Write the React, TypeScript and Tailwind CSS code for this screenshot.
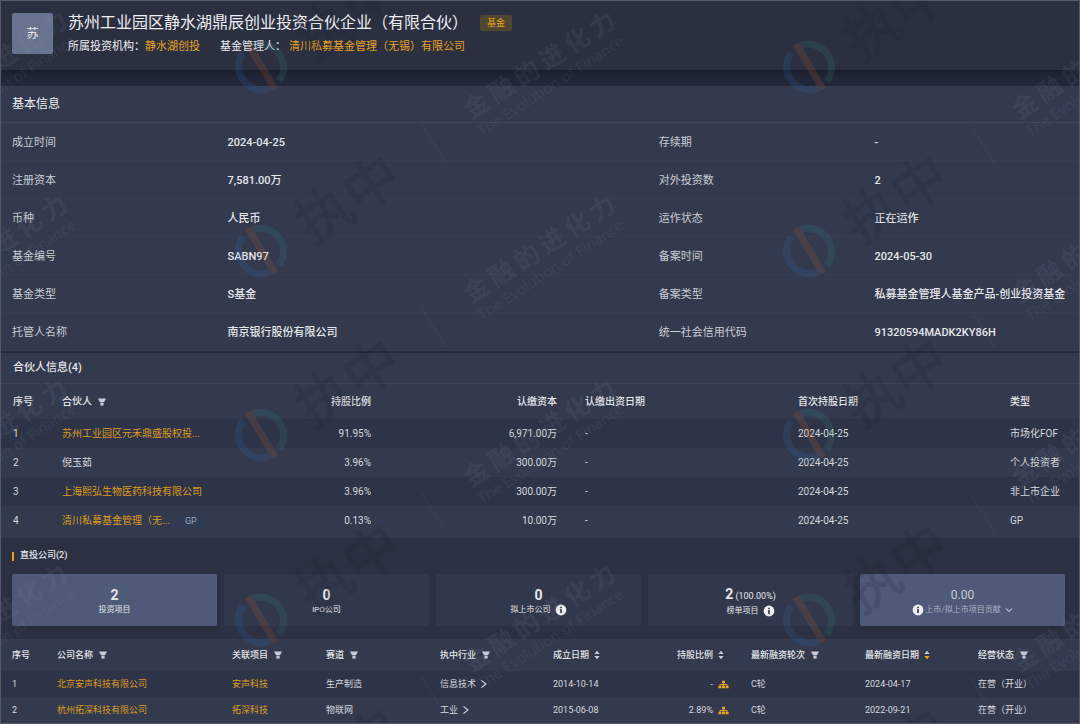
import type { ReactNode } from "react";

const basicInfo = [
  ["成立时间", "2024-04-25", "存续期", "-"],
  ["注册资本", "7,581.00万", "对外投资数", "2"],
  ["币种", "人民币", "运作状态", "正在运作"],
  ["基金编号", "SABN97", "备案时间", "2024-05-30"],
  ["基金类型", "S基金", "备案类型", "私募基金管理人基金产品-创业投资基金"],
  ["托管人名称", "南京银行股份有限公司", "统一社会信用代码", "91320594MADK2KY86H"],
];

const partners = [
  { name: "苏州工业园区元禾鼎盛股权投...", link: true, ratio: "91.95%", capital: "6,971.00万", type: "市场化FOF" },
  { name: "倪玉茹", link: false, ratio: "3.96%", capital: "300.00万", type: "个人投资者" },
  { name: "上海熙弘生物医药科技有限公司", link: true, ratio: "3.96%", capital: "300.00万", type: "非上市企业" },
  { name: "清川私募基金管理（无...", link: true, tag: "GP", ratio: "0.13%", capital: "10.00万", type: "GP" },
];

const companies = [
  {
    name: "北京安声科技有限公司",
    project: "安声科技",
    track: "生产制造",
    industry: "信息技术",
    founded: "2014-10-14",
    ratio: "-",
    round: "C轮",
    financed: "2024-04-17",
    status: "在营（开业）",
  },
  {
    name: "杭州拓深科技有限公司",
    project: "拓深科技",
    track: "物联网",
    industry: "工业",
    founded: "2015-06-08",
    ratio: "2.89%",
    round: "C轮",
    financed: "2022-09-21",
    status: "在营（开业）",
  },
];

function FilterButton({ label }: { label: string }) {
  return (
    <button type="button" aria-label={`筛选${label}`} className="ml-1.5 inline-flex shrink-0">
      <svg viewBox="0 0 8 8" className="h-2 w-2" fill="#c9ccd3">
        <path d="M0 .6h8L6.2 4H1.8z" />
        <path d="M2.4 4.5h3.2v3.1H2.4z" />
      </svg>
    </button>
  );
}

function SortButton({ label, desc = false }: { label: string; desc?: boolean }) {
  return (
    <button type="button" aria-label={`排序${label}`} className="inline-flex w-4 shrink-0 justify-center">
      <svg viewBox="0 0 6 10" className="h-2.5 w-1.5">
        <path d="M3 .8 5.6 4H.4z" fill="#c9ccd3" />
        <path d="M3 9.2 5.6 6H.4z" fill={desc ? "#f0a51c" : "#c9ccd3"} />
      </svg>
    </button>
  );
}

function InfoIcon() {
  return (
    <svg viewBox="0 0 12 12" className="h-3 w-3 shrink-0">
      <circle cx="6" cy="6" r="5.4" fill="#eceef1" />
      <path d="M5.2 5h1.6v4H5.2z" fill="#2b3142" />
      <path d="M5.2 2.8h1.6v1.4H5.2z" fill="#2b3142" />
    </svg>
  );
}

function StructureIcon() {
  return (
    <svg viewBox="0 0 11 9" className="h-[9px] w-[11px]" fill="#eba31c">
      <path d="M4 .8h3v2.4H4zM5.1 3h.8v3h-.8zM1.6 4.1h7.8v.8H1.6zM1.6 4.1h.8v2h-.8zM8.6 4.1h.8v2h-.8z" />
      <path d="M.4 5.7h3v2.5h-3zM4 5.7h3v2.5H4zM7.6 5.7h3v2.5h-3z" />
    </svg>
  );
}

function Chevron({ down = false }: { down?: boolean }) {
  return (
    <svg viewBox="0 0 8 8" className="ml-1 h-2 w-2 shrink-0" fill="none" stroke="currentColor" strokeWidth="1.1">
      <path d={down ? "M1 2.5 4 5.5 7 2.5" : "M1.4.4 6 4 1.4 7.6"} />
    </svg>
  );
}

function NameLink({ children }: { children: ReactNode }) {
  return (
    <a href="#" className="text-[#dd9a1c] hover:underline">
      {children}
    </a>
  );
}

// Repeating brand mark laid over the whole page
function Watermark() {
  const columns = [-288, 260, 808];
  const rows = [66, 250, 434, 619, 803];

  return (
    <svg
      aria-hidden="true"
      className="pointer-events-none absolute inset-0 h-full w-full overflow-hidden font-['Open_Sans','Noto_Sans_CJK_SC',sans-serif]"
    >
      {rows.map((y) =>
        columns.map((x) => (
          <g key={`${x}-${y}`} transform={`translate(${x} ${y})`}>
            <g fill="none" opacity=".17">
              <path d="M-9-21A23 23 0 0 1 18 14" stroke="#2f8a86" strokeWidth="7" />
              <path d="M-18-14A23 23 0 0 0 9 21" stroke="#2c6fc0" strokeWidth="7" />
              <path d="M-13-23 14 22" stroke="#c8602c" strokeWidth="7" />
            </g>
            <g transform="rotate(-33)">
              <text x="45" y="24" fontSize="56" fontWeight="500" fill="#1b2030" opacity=".17">
                执中
              </text>
            </g>
            <path d="M160-128 186-87" stroke="#7c8496" strokeOpacity=".12" />
            <g transform="translate(215 39) rotate(-33)" fill="#8a92a6" opacity=".1">
              <text x="-12 18 48 78 108 138" y="9" fontSize="25" fontWeight="700">
                金融的进化力
              </text>
              <text x="-12" y="29" fontSize="15">
                The Evolution of Finance
              </text>
            </g>
          </g>
        )),
      )}
    </svg>
  );
}

function StatCard({ active = false, children }: { active?: boolean; children: ReactNode }) {
  return (
    <button
      type="button"
      className={`flex h-[52px] flex-col items-center justify-center rounded-xs pt-1 text-[8px] leading-[14px] ${
        active ? "bg-[#4f5a78] text-[#e4e6ea] shadow-md" : "bg-[#32384c] text-[#e4e6ea]"
      }`}
    >
      {children}
    </button>
  );
}

export default function App() {
  return (
    <main className="relative overflow-hidden border border-[#545a6a] bg-[#222739] font-[Roboto,'Noto_Sans_CJK_SC',sans-serif] text-[#d5d8de]">
      <header className="flex items-start gap-[15px] bg-[#2b3041] px-[11px] pt-3 pb-[15px] shadow-[0_2px_6px_#151924]">
        <div className="flex h-[41px] w-[41px] items-center justify-center rounded-xs bg-[#68738f] text-[12px] text-[#eceef1]">
          苏
        </div>
        <div>
          <div className="flex items-center gap-3">
            <h1 className="text-[16px] leading-5 text-[#eceef1]">
              苏州工业园区静水湖鼎辰创业投资合伙企业（有限合伙）
            </h1>
            <span className="rounded-xs bg-[#514730] px-[7px] text-[9px] leading-4 text-[#e8a11d]">基金</span>
          </div>
          <div className="mt-1.5 flex text-[11px] leading-4 text-[#eceef1]">
            <span>所属投资机构：</span>
            <a href="#" className="mr-5 text-[#e8a11d]">
              静水湖创投
            </a>
            <span>基金管理人：</span>
            <a href="#" className="ml-[3px] text-[#e8a11d]">
              清川私募基金管理（无锡）有限公司
            </a>
          </div>
        </div>
      </header>

      {/* 基本信息 */}
      <section className="mt-4 bg-[#333a4e]">
        <h2 className="flex h-[37px] items-center border-b border-[#3f4659] px-[11px] text-[12px] text-[#eceef1]">
          基本信息
        </h2>
        <dl className="grid grid-cols-[1fr_2fr_1fr_1fr] text-[11px]">
          {basicInfo.flat().map((text, i) =>
            i % 2 === 0 ? (
              <dt key={i} className="flex h-[38px] items-center border-b border-[#373e52] px-[11px] pt-1 text-[#c8ccd3]">
                {text}
              </dt>
            ) : (
              <dd
                key={i}
                className="flex h-[38px] items-center border-b border-[#373e52] px-[11px] pt-1 font-medium whitespace-nowrap text-[#e4e6ea]"
              >
                {text}
              </dd>
            ),
          )}
        </dl>
      </section>

      {/* 合伙人信息 */}
      <section className="border-t-2 border-[#232939] bg-[#333a4e] pb-[3px]">
        <h2 className="flex h-[31px] items-center border-b border-[#3c4357] px-3 text-[11px] font-medium text-[#e4e6ea]">
          合伙人信息(4)
        </h2>
        <table className="w-full table-fixed text-left text-[10px] leading-4 whitespace-nowrap">
          <thead>
            <tr className="h-[35px] text-[#e4e6ea] *:px-3.5 *:font-medium *:first:pl-3">
              <th className="w-[47px]">序号</th>
              <th className="w-[173px]">
                <span className="flex items-center">
                  合伙人
                  <FilterButton label="合伙人" />
                </span>
              </th>
              <th className="w-[164px] text-right">持股比例</th>
              <th className="w-[186px] text-right">认缴资本</th>
              <th className="w-[213px]">认缴出资日期</th>
              <th className="w-[212px]">首次持股日期</th>
              <th className="w-[83px]">类型</th>
            </tr>
          </thead>
          <tbody>
            {partners.map((p, i) => (
              <tr key={p.name} className="h-[29px] odd:bg-[#2e3447] *:px-3.5 *:first:pl-3">
                <td>{i + 1}</td>
                <td>
                  {p.link ? <NameLink>{p.name}</NameLink> : p.name}
                  {p.tag && (
                    <span className="ml-2 inline-block rounded-xs bg-[#2f3b50] px-[7px] text-[9px] leading-[14px] text-[#9aa5b8]">
                      {p.tag}
                    </span>
                  )}
                </td>
                <td className="text-right">{p.ratio}</td>
                <td className="text-right">{p.capital}</td>
                <td>-</td>
                <td>2024-04-25</td>
                <td>{p.type}</td>
              </tr>
            ))}
          </tbody>
        </table>
      </section>

      {/* 直投公司 */}
      <section className="bg-[#2b3142]">
        <h2 className="flex h-9 items-center gap-1.5 px-[11px] text-[9px] font-medium text-[#e4e6ea]">
          <span className="h-[9px] w-0.5 bg-[#e8a11d]" />
          直投公司(2)
        </h2>
        <div className="grid grid-cols-5 gap-[7px] pr-3.5 pb-[13px] pl-[11px]">
          <StatCard active>
            <b className="text-[14px] leading-4">2</b>
            <span>投资项目</span>
          </StatCard>
          <StatCard>
            <b className="text-[14px] leading-4">0</b>
            <span>IPO公司</span>
          </StatCard>
          <StatCard>
            <b className="text-[14px] leading-4">0</b>
            <span className="flex items-center gap-1">
              拟上市公司
              <InfoIcon />
            </span>
          </StatCard>
          <StatCard>
            <span className="text-[9px] leading-4">
              <b className="text-[14px]">2</b> (100.00%)
            </span>
            <span className="flex items-center gap-1">
              榜单项目
              <InfoIcon />
            </span>
          </StatCard>
          <StatCard active>
            <span className="text-[12px] leading-4 text-[#c8ccd6]">0.00</span>
            <span className="flex items-center text-[#a9b0c2]">
              <InfoIcon />
              <span className="ml-px">上市/拟上市项目贡献</span>
              <Chevron down />
            </span>
          </StatCard>
        </div>

        <table className="w-full table-fixed bg-[#333a4e] text-left text-[9px] leading-4 whitespace-nowrap">
          <thead>
            <tr className="h-8 text-[#e4e6ea] *:px-[11px] *:font-medium">
              <th className="w-[45px]">序号</th>
              <th className="w-[175px]">
                <span className="flex items-center">
                  公司名称
                  <FilterButton label="公司名称" />
                </span>
              </th>
              <th className="w-[94px]">
                <span className="flex items-center">
                  关联项目
                  <FilterButton label="关联项目" />
                </span>
              </th>
              <th className="w-[114px]">
                <span className="flex items-center">
                  赛道
                  <FilterButton label="赛道" />
                </span>
              </th>
              <th className="w-[113px]">
                <span className="flex items-center">
                  执中行业
                  <FilterButton label="执中行业" />
                </span>
              </th>
              <th className="w-[99px]">
                <span className="flex items-center">
                  成立日期
                  <SortButton label="成立日期" />
                </span>
              </th>
              <th className="w-[99px]">
                <span className="flex items-center justify-end">
                  持股比例
                  <SortButton label="持股比例" />
                </span>
              </th>
              <th className="w-[114px]">
                <span className="flex items-center">
                  最新融资轮次
                  <FilterButton label="最新融资轮次" />
                </span>
              </th>
              <th className="w-[113px]">
                <span className="flex items-center">
                  最新融资日期
                  <SortButton label="最新融资日期" desc />
                </span>
              </th>
              <th className="w-[112px]">
                <span className="flex items-center">
                  经营状态
                  <FilterButton label="经营状态" />
                </span>
              </th>
            </tr>
          </thead>
          <tbody>
            {companies.map((c, i) => (
              <tr key={c.name} className="h-[26px] odd:bg-[#2e3447] *:px-[11px]">
                <td>{i + 1}</td>
                <td>
                  <NameLink>{c.name}</NameLink>
                </td>
                <td>
                  <NameLink>{c.project}</NameLink>
                </td>
                <td>{c.track}</td>
                <td>
                  <span className="flex items-center">
                    {c.industry}
                    <Chevron />
                  </span>
                </td>
                <td>{c.founded}</td>
                <td>
                  <span className="flex items-center justify-end">
                    {c.ratio}
                    <span className="flex w-4 justify-end">
                      <StructureIcon />
                    </span>
                  </span>
                </td>
                <td>{c.round}</td>
                <td>{c.financed}</td>
                <td>{c.status}</td>
              </tr>
            ))}
          </tbody>
        </table>
      </section>

      <Watermark />
    </main>
  );
}
